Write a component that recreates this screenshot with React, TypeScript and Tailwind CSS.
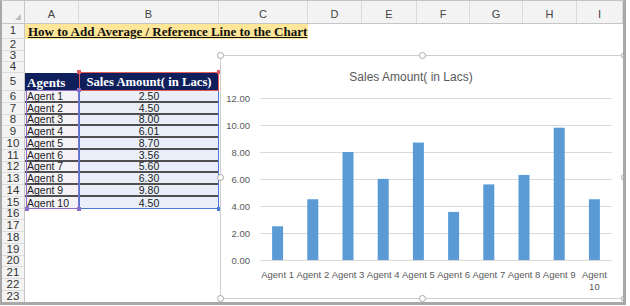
import React from 'react';

const cols = [
  { key: 'A', w: 'w-[54px]' },
  { key: 'B', w: 'w-[140px]' },
  { key: 'C', w: 'w-[89px]' },
  { key: 'D', w: 'w-[54px]' },
  { key: 'E', w: 'w-[55px]' },
  { key: 'F', w: 'w-[53px]' },
  { key: 'G', w: 'w-[53px]' },
  { key: 'H', w: 'w-[54px]' },
  { key: 'I', w: 'w-[46px]' },
];

const sales = [
  { agent: 'Agent 1', value: 2.5 },
  { agent: 'Agent 2', value: 4.5 },
  { agent: 'Agent 3', value: 8.0 },
  { agent: 'Agent 4', value: 6.01 },
  { agent: 'Agent 5', value: 8.7 },
  { agent: 'Agent 6', value: 3.56 },
  { agent: 'Agent 7', value: 5.6 },
  { agent: 'Agent 8', value: 6.3 },
  { agent: 'Agent 9', value: 9.8 },
  { agent: 'Agent 10', value: 4.5 },
];

// row heights, rows 6..23 (11.75px average)
const dataHeights = ['h-[12px]', 'h-[12px]', 'h-[11px]', 'h-[12px]', 'h-[12px]', 'h-[12px]', 'h-[11px]', 'h-[12px]', 'h-[12px]', 'h-[12px]'];
const emptyHeights = ['h-[11px]', 'h-[12px]', 'h-[12px]', 'h-[12px]', 'h-[11px]', 'h-[12px]', 'h-[12px]', 'h-[12px]'];

const RowNum: React.FC<{ n: number }> = ({ n }) => (
  <div className="w-[23px] shrink-0 flex items-center justify-center bg-[#f3f3f3] border-r border-b border-r-[#c6c6c6] border-b-[#dcdcdc] text-[11.5px] text-[#333] leading-none">
    {n}
  </div>
);

const Chart: React.FC = () => {
  // origin of svg in page coords is (221, 56)
  const base = 204;
  const scale = 13.5;
  return (
    <div className="absolute left-[218px] top-[54px] w-[404px] h-[244px] bg-white border border-[#cfcfcf] rounded-[3px]">
      <div className="mt-[14px] pr-[22px] text-center text-[12px] leading-[14px] text-[#595959]">
        Sales Amount( in Lacs)
      </div>
      <svg width="402" height="242" className="absolute left-0 top-0">
        {[0, 2, 4, 6, 8, 10, 12].map((v) => {
          const y = base - v * scale + 0.5;
          return (
            <g key={v}>
              <line x1={39} x2={391} y1={y} y2={y} stroke="#d9d9d9" strokeWidth={1} />
              <text x={29} y={y + 3} textAnchor="end" fontSize="9.5" fill="#595959">
                {v.toFixed(2)}
              </text>
            </g>
          );
        })}
        {sales.map((s, i) => {
          const cx = 39 + 17.6 + 35.2 * i;
          const h = s.value * scale;
          return <rect key={s.agent} x={cx - 5.5} y={base - h} width={11} height={h} fill="#5b9bd5" />;
        })}
        {sales.map((s, i) => {
          const cx = 39 + 17.6 + 35.2 * i;
          if (s.agent === 'Agent 10') {
            return (
              <text key={s.agent} x={cx} textAnchor="middle" fontSize="9.5" fill="#595959">
                <tspan x={cx} y={221.5}>Agent</tspan>
                <tspan x={cx} y={233.5}>10</tspan>
              </text>
            );
          }
          return (
            <text key={s.agent} x={cx} y={221.5} textAnchor="middle" fontSize="9.5" fill="#595959">
              {s.agent}
            </text>
          );
        })}
      </svg>
    </div>
  );
};

const handles = [
  'left-[215px] top-[51px]',
  'left-[417px] top-[51px]',
  'left-[619px] top-[51px]',
  'left-[215px] top-[173px]',
  'left-[619px] top-[173px]',
  'left-[215px] top-[294px]',
  'left-[417px] top-[294px]',
  'left-[619px] top-[294px]',
];

export default function App() {
  return (
    <div className="w-[630px] h-[306px] bg-white font-['Liberation_Sans',Arial,sans-serif]">
      <div className="relative w-[626px] h-[305px] overflow-hidden border-t border-l-2 border-r-[3px] border-b-[3px] border-[#a8a8a8] border-t-[#c4c4c4]">
        {/* column header */}
        <div className="flex h-[23px] bg-[#f3f3f3] border-b border-[#c6c6c6]">
          <div className="relative w-[23px] shrink-0 border-r border-[#c6c6c6]">
            <div className="absolute right-[3px] bottom-[3px] w-0 h-0 border-l-[6px] border-l-transparent border-b-[6px] border-b-[#bcbcbc]" />
          </div>
          {cols.map((c) => (
            <div
              key={c.key}
              className={`${c.w} shrink-0 flex items-end justify-center pb-[3px] text-[11px] leading-none text-[#444] border-r border-[#dadada]`}
            >
              {c.key}
            </div>
          ))}
        </div>

        {/* row 1 */}
        <div className="flex h-[15px]">
          <RowNum n={1} />
          <div className="w-[283px] shrink-0 flex items-center bg-[#ffe699] pl-[3px] font-['Liberation_Serif',serif] font-bold text-[13px] leading-none text-[#111] underline underline-offset-[1px]">
            How to Add Average / Reference Line to the Chart
          </div>
        </div>

        {/* rows 2-4 */}
        <div className="flex h-[12px]"><RowNum n={2} /></div>
        <div className="flex h-[11px]"><RowNum n={3} /></div>
        <div className="flex h-[11px]"><RowNum n={4} /></div>

        {/* row 5 header */}
        <div className="flex h-[18px]">
          <RowNum n={5} />
          <div className="w-[54px] shrink-0 flex items-center bg-[#0f1f5c] pl-[2px] font-['Liberation_Serif',serif] font-bold text-[13px] text-white leading-none">
            Agents
          </div>
          <div className="w-[140px] shrink-0 flex items-center justify-center bg-[#0f1f5c] font-['Liberation_Serif',serif] font-bold text-[12.7px] text-white leading-none">
            Sales Amount( in Lacs)
          </div>
        </div>

        {/* data rows */}
        {sales.map((s, i) => (
          <div key={s.agent} className={`flex ${dataHeights[i]}`}>
            <RowNum n={i + 6} />
            <div
              className={`w-[54px] shrink-0 flex items-center bg-[#f4f2f7] pl-[2px] text-[10.5px] leading-none text-[#1c1c1c] ${i < 9 ? 'border-b-2 border-[#4f4f4f]' : ''}`}
            >
              {s.agent}
            </div>
            <div
              className={`w-[140px] shrink-0 flex items-center justify-center bg-[#e9eef8] text-[10.5px] leading-none text-[#1c1c1c] ${i < 9 ? 'border-b-2 border-[#4f4f4f]' : ''}`}
            >
              {s.value.toFixed(2)}
            </div>
          </div>
        ))}

        {/* rows 16-23 */}
        {emptyHeights.map((h, i) => (
          <div key={i} className={`flex ${h}`}>
            <RowNum n={i + 16} />
          </div>
        ))}

        {/* chart range highlights */}
        <div className="absolute left-[24px] top-[89px] w-[53px] h-[119px] border border-[#8a6cc9]" />
        <div className="absolute left-[77px] top-[71px] w-[140px] h-[19px] border border-[#e25b5b]" />
        <div className="absolute left-[77px] top-[90px] w-[140px] h-[118px] border border-[#4a7bd4] border-t-0" />
        <div className="absolute left-[75px] top-[87px] w-[4px] h-[4px] bg-[#8a6cc9]" />
        <div className="absolute left-[75px] top-[206px] w-[4px] h-[4px] bg-[#8a6cc9]" />
        <div className="absolute left-[23px] top-[206px] w-[4px] h-[4px] bg-[#8a6cc9]" />
        <div className="absolute left-[75px] top-[69px] w-[4px] h-[4px] bg-[#e25b5b]" />
        <div className="absolute left-[215px] top-[69px] w-[4px] h-[4px] bg-[#e25b5b]" />
        <div className="absolute left-[215px] top-[206px] w-[4px] h-[4px] bg-[#4a7bd4]" />

        <Chart />
        {handles.map((h) => (
          <div key={h} className={`absolute ${h} w-[7px] h-[7px] rounded-full bg-white border border-[#a6a6a6]`} />
        ))}
      </div>
    </div>
  );
}
